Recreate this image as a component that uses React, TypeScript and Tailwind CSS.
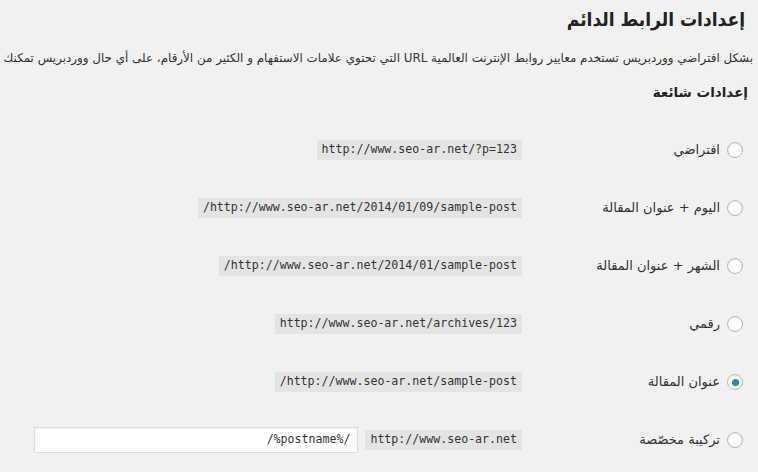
import React from 'react';

const rows = [
  { label: 'افتراضي', url: 'http://www.seo-ar.net/?p=123' },
  { label: 'اليوم + عنوان المقالة', url: 'http://www.seo-ar.net/2014/01/09/sample-post/' },
  { label: 'الشهر + عنوان المقالة', url: 'http://www.seo-ar.net/2014/01/sample-post/' },
  { label: 'رقمي', url: 'http://www.seo-ar.net/archives/123' },
  { label: 'عنوان المقالة', url: 'http://www.seo-ar.net/sample-post/', checked: true },
];

const Radio: React.FC<{ checked?: boolean }> = ({ checked }) => (
  <span className="flex h-4 w-4 shrink-0 items-center justify-center rounded-full border border-[#b4b9be] bg-white shadow-[inset_0_1px_2px_rgba(0,0,0,0.1)]">
    {checked && <span className="h-[7px] w-[7px] rounded-full bg-[#1e8cbe]" />}
  </span>
);

const Code: React.FC<{ children: React.ReactNode }> = ({ children }) => (
  <code className="flex h-5 items-center whitespace-nowrap bg-[#e4e4e4] px-[5px] font-['DejaVu_Sans_Mono',monospace] text-[11.6px] text-[#333]">
    {children}
  </code>
);

export default function App() {
  return (
    <div
      dir="rtl"
      className="h-[472px] w-[758px] overflow-hidden bg-[#f1f1f1] font-['DejaVu_Sans',sans-serif] text-[#333]"
    >
      <h1 className="mr-[13px] pt-[4px] font-['DejaVu_Sans_Condensed','DejaVu_Sans',sans-serif] text-[19px] font-bold leading-[30px] text-[#222] font-stretch-condensed">
        إعدادات الرابط الدائم
      </h1>

      <p className="mr-[5px] mt-[16px] whitespace-nowrap text-[11.9px] leading-[16px]">
        بشكل افتراضي ووردبريس تستخدم معايير روابط الإنترنت العالمية URL التي تحتوي علامات الاستفهام و الكثير من الأرقام، على أي حال ووردبريس تمكنك
      </p>

      <h3 className="mr-[10px] mt-[16px] text-[13.5px] font-bold leading-[20px] text-[#222]">
        إعدادات شائعة
      </h3>

      <div className="mt-[19px] flex flex-col pr-[15px]">
        {rows.map((r) => (
          <div key={r.label} className="flex h-[58px] items-center">
            <label className="flex w-[221px] shrink-0 items-center gap-[7px] text-[13px]">
              <Radio checked={r.checked} />
              <span>{r.label}</span>
            </label>
            <Code>{r.url}</Code>
          </div>
        ))}
        <div className="flex h-[58px] items-center">
          <label className="flex w-[221px] shrink-0 items-center gap-[7px] text-[13px]">
            <Radio />
            <span>تركيبة مخصّصة</span>
          </label>
          <Code>http://www.seo-ar.net</Code>
          <div
            dir="ltr"
            className="mr-[7px] flex h-[26px] w-[324px] items-center justify-end border border-[#ddd] bg-white px-[7px] font-['DejaVu_Sans_Mono',monospace] text-[11.6px] text-[#333] shadow-[inset_0_1px_2px_rgba(0,0,0,0.07)]"
          >
            /%postname%/
          </div>
        </div>
      </div>
    </div>
  );
}
